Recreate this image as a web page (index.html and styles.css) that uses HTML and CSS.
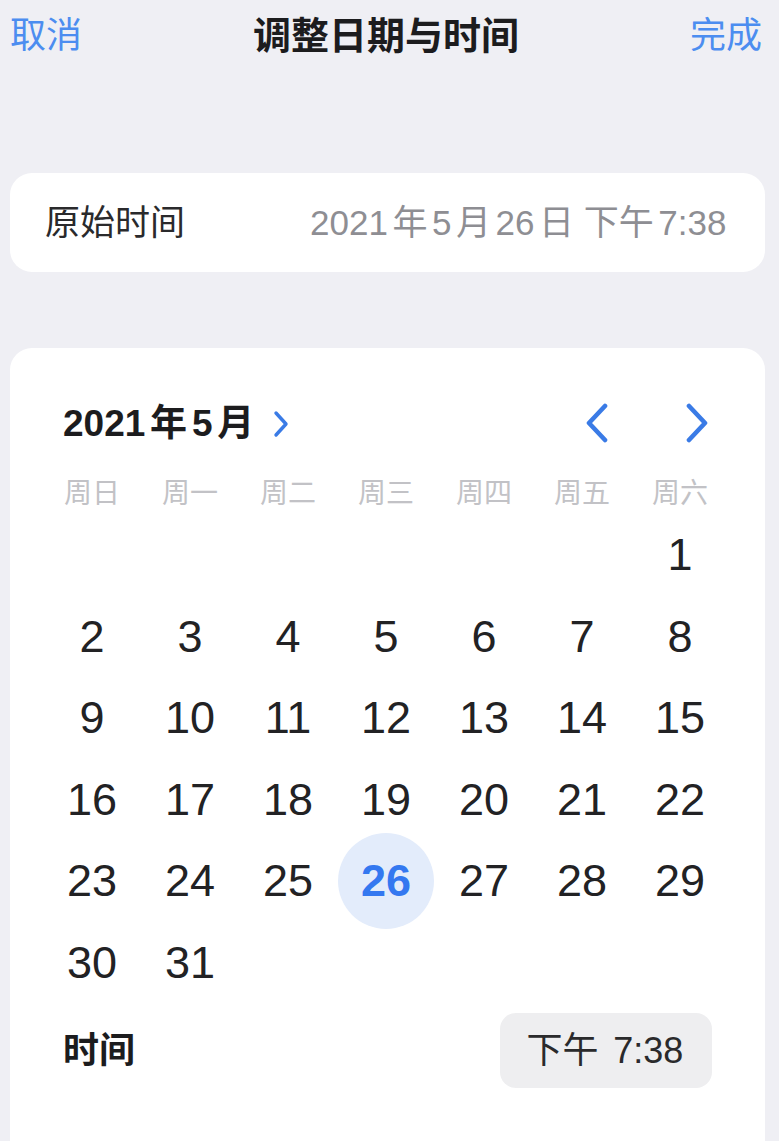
FILE: index.html
```html
<!DOCTYPE html>
<html lang="zh-CN">
<head>
<meta charset="utf-8">
<title>调整日期与时间</title>
<link rel="stylesheet" href="styles.css">
</head>
<body>
<div class="screen">
  <header class="nav-bar">
    <span class="nav-btn">取消</span>
    <span class="nav-title">调整日期与时间</span>
    <span class="nav-btn">完成</span>
  </header>

  <section class="card original">
    <span class="original-label">原始时间</span>
    <span class="original-value"><span class="n">2021</span>年<span class="n">5</span>月<span class="n">26</span>日 下午<span class="n">7:38</span></span>
  </section>

  <section class="card picker">
    <div class="month-row">
      <div class="month-title">
        <span><span class="n">2021</span>年<span class="n">5</span>月</span>
        <svg class="month-chevron" width="16" height="28" viewBox="0 0 16 28" aria-hidden="true">
          <path d="M3 3 L13 14 L3 25" fill="none" stroke="#3a7be6" stroke-width="3.4" stroke-linecap="round" stroke-linejoin="round"/>
        </svg>
      </div>
      <div class="month-nav">
        <svg width="26" height="40" viewBox="0 0 26 40" aria-hidden="true">
          <path d="M21 3 L5 20 L21 37" fill="none" stroke="#3a7be6" stroke-width="4.6" stroke-linecap="round" stroke-linejoin="round"/>
        </svg>
        <svg width="26" height="40" viewBox="0 0 26 40" aria-hidden="true">
          <path d="M5 3 L21 20 L5 37" fill="none" stroke="#3a7be6" stroke-width="4.6" stroke-linecap="round" stroke-linejoin="round"/>
        </svg>
      </div>
    </div>

    <div class="weekdays">
      <span>周日</span><span>周一</span><span>周二</span><span>周三</span><span>周四</span><span>周五</span><span>周六</span>
    </div>

    <div class="days">
      <span></span><span></span><span></span><span></span><span></span><span></span><span>1</span>
      <span>2</span><span>3</span><span>4</span><span>5</span><span>6</span><span>7</span><span>8</span>
      <span>9</span><span>10</span><span>11</span><span>12</span><span>13</span><span>14</span><span>15</span>
      <span>16</span><span>17</span><span>18</span><span>19</span><span>20</span><span>21</span><span>22</span>
      <span>23</span><span>24</span><span>25</span><span class="selected">26</span><span>27</span><span>28</span><span>29</span>
      <span>30</span><span>31</span>
    </div>

    <div class="time-row">
      <span class="time-label">时间</span>
      <span class="time-pill">下午 <span class="n">7:38</span></span>
    </div>
  </section>
</div>
</body>
</html>
```
FILE: styles.css
```css
html, body {
  margin: 0;
  padding: 0;
}

body {
  background: #efeff4;
  font-family: "Liberation Sans", "Noto Sans CJK SC", sans-serif;
  color: #1f1f21;
  height: 1141px;
  overflow: hidden;
}

.screen {
  width: 779px;
}

/* latin runs next to CJK get a little breathing room */
.n {
  margin: 0 0.13em;
}

.nav-bar {
  height: 72px;
  display: flex;
  align-items: center;
  justify-content: space-between;
  padding: 0 17px 0 10px;
  font-size: 36px;
  line-height: 1;
}

.nav-btn {
  color: #4c8df0;
}

.nav-title {
  font-size: 38px;
  font-weight: 700;
  color: #1c1c1e;
}

.card {
  background: #ffffff;
  border-radius: 22px;
  margin: 0 14px 0 10px;
}

.original {
  margin-top: 101px;
  height: 99px;
  display: flex;
  align-items: center;
  justify-content: space-between;
  padding: 0 34px 0 35px;
  line-height: 1;
}

.original-label {
  font-size: 35px;
  color: #2a2a2c;
}

.original-value {
  font-size: 35px;
  color: #8e8e93;
}

.picker {
  margin-top: 76px;
  padding: 45px 36px 80px 33px;
}

.month-row {
  height: 60px;
  display: flex;
  align-items: center;
  justify-content: space-between;
  padding: 0 19px 0 20px;
}

.month-title {
  display: flex;
  align-items: center;
  font-size: 37px;
  font-weight: 700;
  line-height: 1;
  color: #1c1c1e;
}

.month-title .n:first-child {
  margin-left: 0;
}

.month-chevron {
  margin-left: 19px;
  margin-top: 2px;
}

.month-nav {
  display: flex;
  gap: 74px;
  align-items: center;
}

.weekdays {
  margin-top: 21px;
  height: 40px;
  display: grid;
  grid-template-columns: repeat(7, 98px);
  align-items: center;
  justify-items: center;
  font-size: 28px;
  line-height: 1;
  color: #c2c2c6;
}

.days {
  display: grid;
  grid-template-columns: repeat(7, 98px);
  grid-auto-rows: 81.5px;
  align-items: center;
  justify-items: center;
  font-size: 45px;
  line-height: 1;
  color: #222224;
}

.days span {
  display: flex;
  align-items: center;
  justify-content: center;
  width: 96px;
  height: 96px;
}

.days .selected {
  background: #e3ecfb;
  border-radius: 50%;
  color: #3478f0;
  font-weight: 700;
}

.time-row {
  margin-top: 10px;
  height: 75px;
  display: flex;
  align-items: center;
  justify-content: space-between;
  padding: 0 17px 0 20px;
}

.time-label {
  font-size: 36px;
  font-weight: 700;
  line-height: 1;
  color: #1c1c1e;
}

.time-pill {
  height: 75px;
  box-sizing: border-box;
  padding: 0 24px 0 27px;
  display: flex;
  align-items: center;
  white-space: pre;
  background: #eeeef0;
  border-radius: 16px;
  font-size: 36px;
  line-height: 1;
  color: #2a2a2c;
}
```
